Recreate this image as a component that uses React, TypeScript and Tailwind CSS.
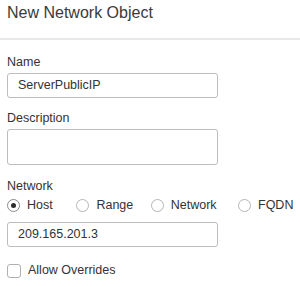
const Radio = ({ label, checked, width }: { label: string; checked?: boolean; width: string }) => {
    return (
        <label className={`flex items-center gap-[7px] ${width}`}>
            <span className={`w-[13px] h-[13px] rounded-full border flex items-center justify-center flex-shrink-0 ${checked ? 'border-[#8a8a8a]' : 'border-[#b5b5b5]'}`}>
                {checked && <span className="w-[5px] h-[5px] rounded-full bg-[#2e2e2e]" />}
            </span>
            <span className="whitespace-nowrap">{label}</span>
        </label>
    );
};

export default function App() {
    return (
        <div className="w-[300px] h-[287px] bg-white overflow-hidden text-[#333] font-['Liberation_Sans',Arial,sans-serif]">
            <div className="h-[40px] border-b-2 border-[#e8e8e8] px-[7px] pt-[3px]">
                <h1 className="text-[16px] leading-[20px] text-[#3a3a3a]">New Network Object</h1>
            </div>
            <div className="px-[7px] text-[12.5px] leading-[15px]">
                <div className="mt-[15px]">Name</div>
                <div className="mt-[3px] w-[211px] h-[25px] border border-[#bdbdbd] rounded-[3px] pl-[10px] flex items-center">
                    ServerPublicIP
                </div>
                <div className="mt-[13px]">Description</div>
                <div className="mt-[3px] w-[211px] h-[36px] border border-[#bdbdbd] rounded-[3px]" />
                <div className="mt-[14px]">Network</div>
                <div className="mt-[4px] h-[14px] flex items-center">
                    <Radio label="Host" checked width="w-[70px]" />
                    <Radio label="Range" width="w-[75px]" />
                    <Radio label="Network" width="w-[88px]" />
                    <Radio label="FQDN" width="w-[55px]" />
                </div>
                <div className="mt-[10px] w-[211px] h-[25px] border border-[#bdbdbd] rounded-[3px] pl-[10px] flex items-center">
                    209.165.201.3
                </div>
                <label className="mt-[16px] flex items-center gap-[7px]">
                    <span className="w-[14px] h-[14px] border border-[#b0b0b0] rounded-[3px] flex-shrink-0" />
                    <span>Allow Overrides</span>
                </label>
            </div>
        </div>
    );
}
